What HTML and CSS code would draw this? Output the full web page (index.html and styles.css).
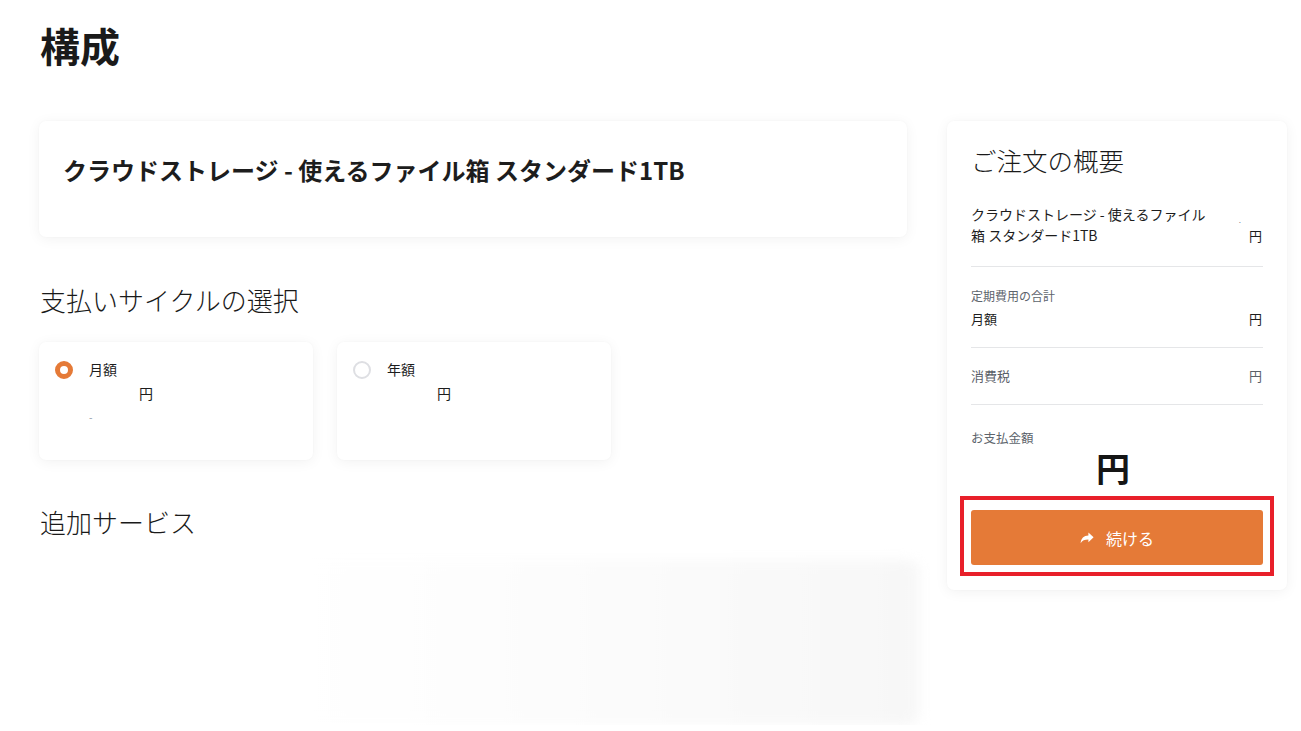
FILE: index.html
```html
<!DOCTYPE html>
<html lang="ja">
<head>
<meta charset="utf-8">
<title>構成</title>
<link rel="stylesheet" href="styles.css">
</head>
<body>
<div class="page">
  <h1 class="title">構成</h1>
  <div class="layout">
    <main class="main">
      <section class="card product">
        <h2 class="product-name">クラウドストレージ - 使えるファイル箱 スタンダード1TB</h2>
      </section>

      <h3 class="section-title">支払いサイクルの選択</h3>
      <div class="cycles">
        <label class="card cycle">
          <span class="radio checked"></span>
          <span class="cycle-body">
            <span class="cycle-name">月額</span>
            <span class="cycle-price">円</span>
            <span class="cycle-note">-</span>
          </span>
        </label>
        <label class="card cycle">
          <span class="radio"></span>
          <span class="cycle-body">
            <span class="cycle-name">年額</span>
            <span class="cycle-price">円</span>
          </span>
        </label>
      </div>

      <h3 class="section-title addon-title">追加サービス</h3>
      <div class="skeleton"></div>
    </main>

    <aside class="card summary">
      <h3 class="summary-title">ご注文の概要</h3>
      <div class="row product-row">
        <span class="row-label dark">クラウドストレージ - 使えるファイル箱 スタンダード1TB</span>
        <span class="row-value dark"><span class="dot">.</span>円</span>
      </div>
      <div class="divider"></div>
      <div class="group">
        <div class="small-label">定期費用の合計</div>
        <div class="row">
          <span class="row-label dark">月額</span>
          <span class="row-value dark">円</span>
        </div>
      </div>
      <div class="divider"></div>
      <div class="row tax-row">
        <span class="row-label">消費税</span>
        <span class="row-value">円</span>
      </div>
      <div class="divider"></div>
      <div class="small-label total-label">お支払金額</div>
      <div class="total">円</div>
      <div class="highlight">
        <button class="continue" type="button">
          <svg class="share" viewBox="0 0 14 12" width="14" height="12" aria-hidden="true"><path d="M13.6 5.2 8.4 0.6v2.8C3.8 3.6 1 6.2 0.6 11.2 2.2 8.4 4.6 7.4 8.4 7.4v2.9z" fill="#fff"/></svg>
          <span>続ける</span>
        </button>
      </div>
    </aside>
  </div>
</div>
</body>
</html>
```

FILE: styles.css
```css
* { box-sizing: border-box; }

html, body {
  margin: 0;
  padding: 0;
  background: #fff;
}

body {
  font-family: "Noto Sans CJK JP", "Noto Sans", sans-serif;
  color: #1b1b1b;
}

.page {
  padding: 16px 14px 0 39px;
}

.title {
  margin: 0;
  font-size: 40px;
  line-height: 58px;
  font-weight: 700;
  color: #1a1a1a;
  padding-left: 1px;
}

.layout {
  display: flex;
  align-items: flex-start;
  gap: 40px;
  margin-top: 47px;
}

.main {
  width: 868px;
  flex: none;
}

.card {
  background: #fff;
  border-radius: 7px;
  box-shadow: 0 2px 14px rgba(0, 0, 0, 0.055), 0 0 2px rgba(0, 0, 0, 0.03);
}

.product {
  height: 116px;
  padding: 29px 24px;
}

.product-name {
  margin: 0;
  font-size: 24px;
  line-height: 40px;
  font-weight: 700;
  color: #1d1d1d;
}

.section-title {
  margin: 43px 0 0 1px;
  font-size: 26px;
  line-height: 40px;
  font-weight: 300;
  color: #1a1a1a;
}

.cycles {
  display: flex;
  gap: 24px;
  margin-top: 22px;
}

.cycle {
  width: 274px;
  height: 118px;
  display: flex;
  align-items: flex-start;
  gap: 16px;
  padding: 18px 16px;
}

.radio {
  width: 18px;
  height: 18px;
  border-radius: 50%;
  border: 2px solid #dedfe3;
  flex: none;
  margin-top: 1px;
}

.radio.checked {
  border: 5px solid #e57a37;
}

.cycle-body {
  display: flex;
  flex-direction: column;
}

.cycle-name {
  font-size: 14px;
  line-height: 18px;
  color: #1d1d1d;
}

.cycle-price {
  font-size: 14px;
  line-height: 18px;
  margin-top: 6px;
  padding-left: 50px;
  color: #1d1d1d;
}

.cycle-note {
  font-size: 10px;
  line-height: 14px;
  margin-top: 8px;
  color: #8a96a3;
}

.addon-title {
  margin-top: 42px;
}

.skeleton {
  margin-top: 18px;
  height: 165px;
  margin-left: -8px;
  margin-right: -12px;
  background: linear-gradient(90deg, #ffffff 0%, #ffffff 28%, #fdfdfd 50%, #fafafa 75%, #f7f7f7 100%);
  filter: blur(6px);
  border-radius: 12px;
}

.summary {
  width: 340px;
  flex: none;
  padding: 22px 24px 14px;
}

.summary-title {
  margin: 0;
  font-size: 25.5px;
  line-height: 34px;
  font-weight: 300;
  color: #1a1a1a;
}

.row {
  display: flex;
  justify-content: space-between;
  align-items: flex-end;
  font-size: 13px;
  line-height: 20px;
  color: #5a6068;
}

.row .dark, .dark {
  color: #1d1d1d;
}

.product-row {
  margin-top: 27px;
  margin-bottom: 20px;
}

.product-row .row-label {
  width: 240px;
  font-size: 14px;
  line-height: 21px;
}

.row-value {
  position: relative;
  padding-right: 1px;
}

.dot {
  position: absolute;
  right: 22px;
  top: -16px;
  font-size: 8px;
  color: #7a8590;
}

.divider {
  height: 1px;
  background: #e5e6e8;
}

.group {
  padding: 20px 0 18px;
}

.small-label {
  font-size: 12px;
  line-height: 18px;
  color: #5d646c;
}

.group .row {
  margin-top: 4px;
}

.tax-row {
  padding: 18px 0 18px;
}

.total-label {
  margin-top: 24px;
  font-size: 12.5px;
}

.total {
  text-align: center;
  font-size: 34px;
  line-height: 36px;
  font-weight: 700;
  color: #151515;
  margin-top: 3px;
  margin-right: 8px;
}

.highlight {
  margin: 10px -11px 0;
  border: 4px solid #e8202a;
  padding: 10px 7px 7px;
}

.continue {
  width: 100%;
  height: 55px;
  border: none;
  border-radius: 3px;
  background: #e57a37;
  color: #fff;
  font-family: inherit;
  font-size: 16px;
  display: flex;
  align-items: center;
  justify-content: center;
  gap: 12px;
  cursor: pointer;
}

.share {
  margin-top: 1px;
}
```
